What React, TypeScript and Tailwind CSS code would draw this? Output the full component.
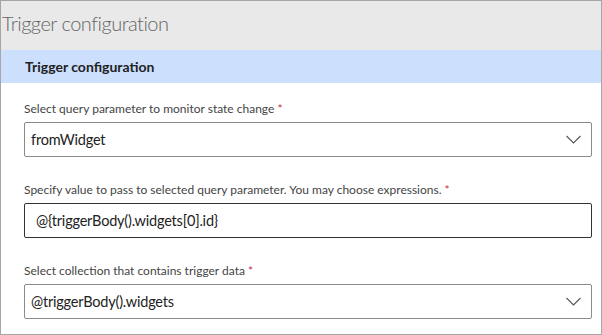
export default function App() {
  const fields = [
    {
      label: "Select query parameter to monitor state change",
      value: "fromWidget",
      dropdown: true,
      dark: false,
    },
    {
      label:
        "Specify value to pass to selected query parameter. You may choose expressions.",
      value: "@{triggerBody().widgets[0].id}",
      dropdown: false,
      dark: true,
    },
    {
      label: "Select collection that contains trigger data",
      value: "@triggerBody().widgets",
      dropdown: true,
      dark: false,
    },
  ];

  return (
    <div
      className="w-[602px] h-[335px] border border-[#a6a6a6] bg-white overflow-hidden"
      style={{ fontFamily: 'Lato, "Noto Sans", sans-serif' }}
    >
      <div className="h-[49px] bg-[#e9e9e9] flex items-center pl-[1px]">
        <h1 className="text-[20px] font-light text-[#666] tracking-[-0.5px] -mt-[5px]">
          Trigger configuration
        </h1>
      </div>
      <div className="h-[33px] bg-[#cce0fe] flex items-center pl-[24px]">
        <h2 className="text-[14px] font-bold text-[#222]">
          Trigger configuration
        </h2>
      </div>
      <div className="pl-[23px] pr-[9px] pt-[18px] flex flex-col gap-[25px]">
        {fields.map((f) => (
          <div key={f.label} className="flex flex-col">
            <label className="text-[12px] text-[#444] leading-[16px] h-[16px] mb-[5px]">
              {f.label} <span className="text-[#c4314b]">*</span>
            </label>
            <div
              className={`h-[35px] rounded-[2px] border flex items-center justify-between ${
                f.dark ? "border-[#323232] pl-[11px]" : "border-[#8a8a8a] pl-[6px]"
              } pr-[10px]`}
            >
              <span className="text-[14.5px] text-[#222] tracking-[-0.2px]">
                {f.value}
              </span>
              {f.dropdown && (
                <svg width="15" height="9" viewBox="0 0 15 9" fill="none">
                  <path d="M0.5 1l7 7 7-7" stroke="#555" strokeWidth="1.1" />
                </svg>
              )}
            </div>
          </div>
        ))}
      </div>
    </div>
  );
}
